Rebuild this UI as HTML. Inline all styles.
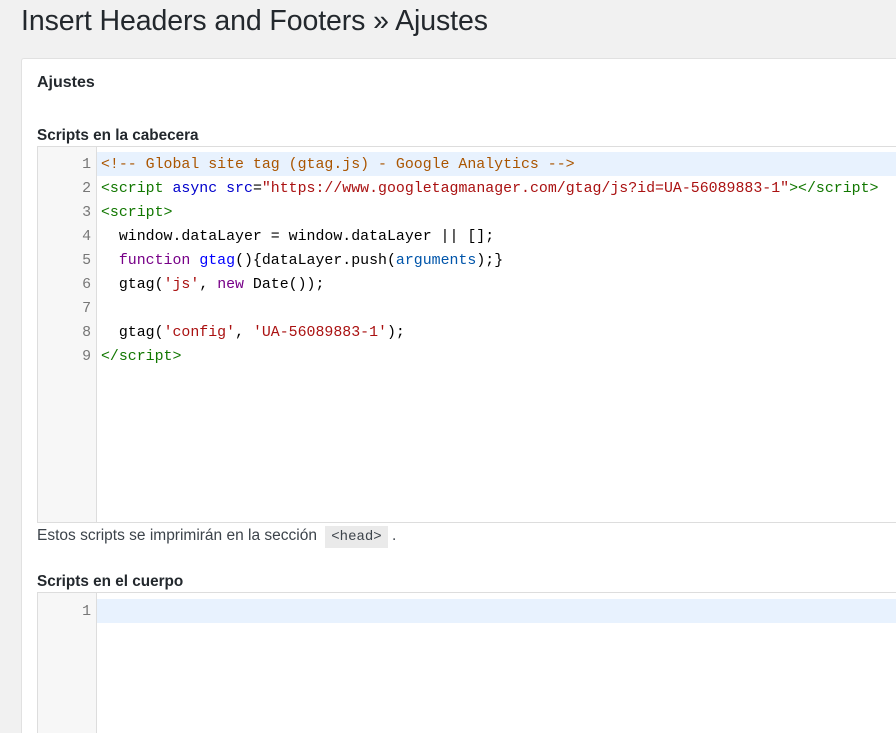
<!DOCTYPE html>
<html><head><meta charset="utf-8"><style>
html,body{margin:0;width:896px;height:733px;overflow:hidden}
body{background:#f1f1f1;font-family:"Liberation Sans",sans-serif;color:#23282d;position:relative}
h1{position:absolute;left:21px;top:5px;margin:0;font-weight:400;font-size:28.5px;letter-spacing:-0.1px;color:#23282d}
.card{position:absolute;left:21px;top:58px;width:900px;height:700px;background:#fff;border:1px solid #e1e1e1;border-radius:3px 0 0 0}
.t{position:absolute;font-size:16px;font-weight:bold;color:#23282d}
.lab{position:absolute;font-size:15.3px;font-weight:bold;color:#23282d}
.ed{position:absolute;left:37px;width:880px;border:1px solid #ddd;background:#fff}
.gut{position:absolute;left:0;top:0;bottom:0;width:58px;background:#f7f7f7;border-right:1px solid #ddd}
.code{position:absolute;left:63px;top:6px;right:0;font-family:"Liberation Mono",monospace;font-size:14.9px;line-height:24px;white-space:pre;color:#000}
.ln{position:absolute;left:0;width:53px;text-align:right;color:#777;font-family:"Liberation Mono",monospace;font-size:14.9px;line-height:24px}
.hl{position:absolute;left:59px;right:0;height:24px;background:#e8f2fe}
.c{color:#a50}.tg{color:#170}.a{color:#00c}.s{color:#a11}.k{color:#708}.d{color:#00f}.v{color:#05a}
.note{position:absolute;left:37px;top:527px;font-size:15.5px;color:#3c434a}
.note code{background:#eaeaea;padding:3px 6px;font-family:"Liberation Mono",monospace;font-size:14px;margin-left:4px}
</style></head><body>
<h1>Insert Headers and Footers » Ajustes</h1>
<div class="card"></div>
<div class="t" style="left:37px;top:74px">Ajustes</div>
<div class="lab" style="left:37px;top:127px">Scripts en la cabecera</div>
<div class="ed" style="top:146px;height:375px">
<div class="gut"></div>
<div class="hl" style="top:5px"></div>
<div class="ln" style="top:6px">1<br>2<br>3<br>4<br>5<br>6<br>7<br>8<br>9</div>
<div class="code"><span class="c">&lt;!-- Global site tag (gtag.js) - Google Analytics --&gt;</span>
<span class="tg">&lt;script</span> <span class="a">async</span> <span class="a">src</span>=<span class="s">"https://www.googletagmanager.com/gtag/js?id=UA-56089883-1"</span><span class="tg">&gt;&lt;/script&gt;</span>
<span class="tg">&lt;script&gt;</span>
  window.dataLayer = window.dataLayer || [];
  <span class="k">function</span> <span class="d">gtag</span>(){dataLayer.push(<span class="v">arguments</span>);}
  gtag(<span class="s">'js'</span>, <span class="k">new</span> Date());

  gtag(<span class="s">'config'</span>, <span class="s">'UA-56089883-1'</span>);
<span class="tg">&lt;/script&gt;</span></div>
</div>
<div class="note">Estos scripts se imprimirán en la sección <code>&lt;head&gt;</code> .</div>
<div class="lab" style="left:37px;top:573px">Scripts en el cuerpo</div>
<div class="ed" style="top:592px;height:160px">
<div class="gut"></div>
<div class="hl" style="top:6px"></div>
<div class="ln" style="top:7px">1</div>
</div>
</body></html>
